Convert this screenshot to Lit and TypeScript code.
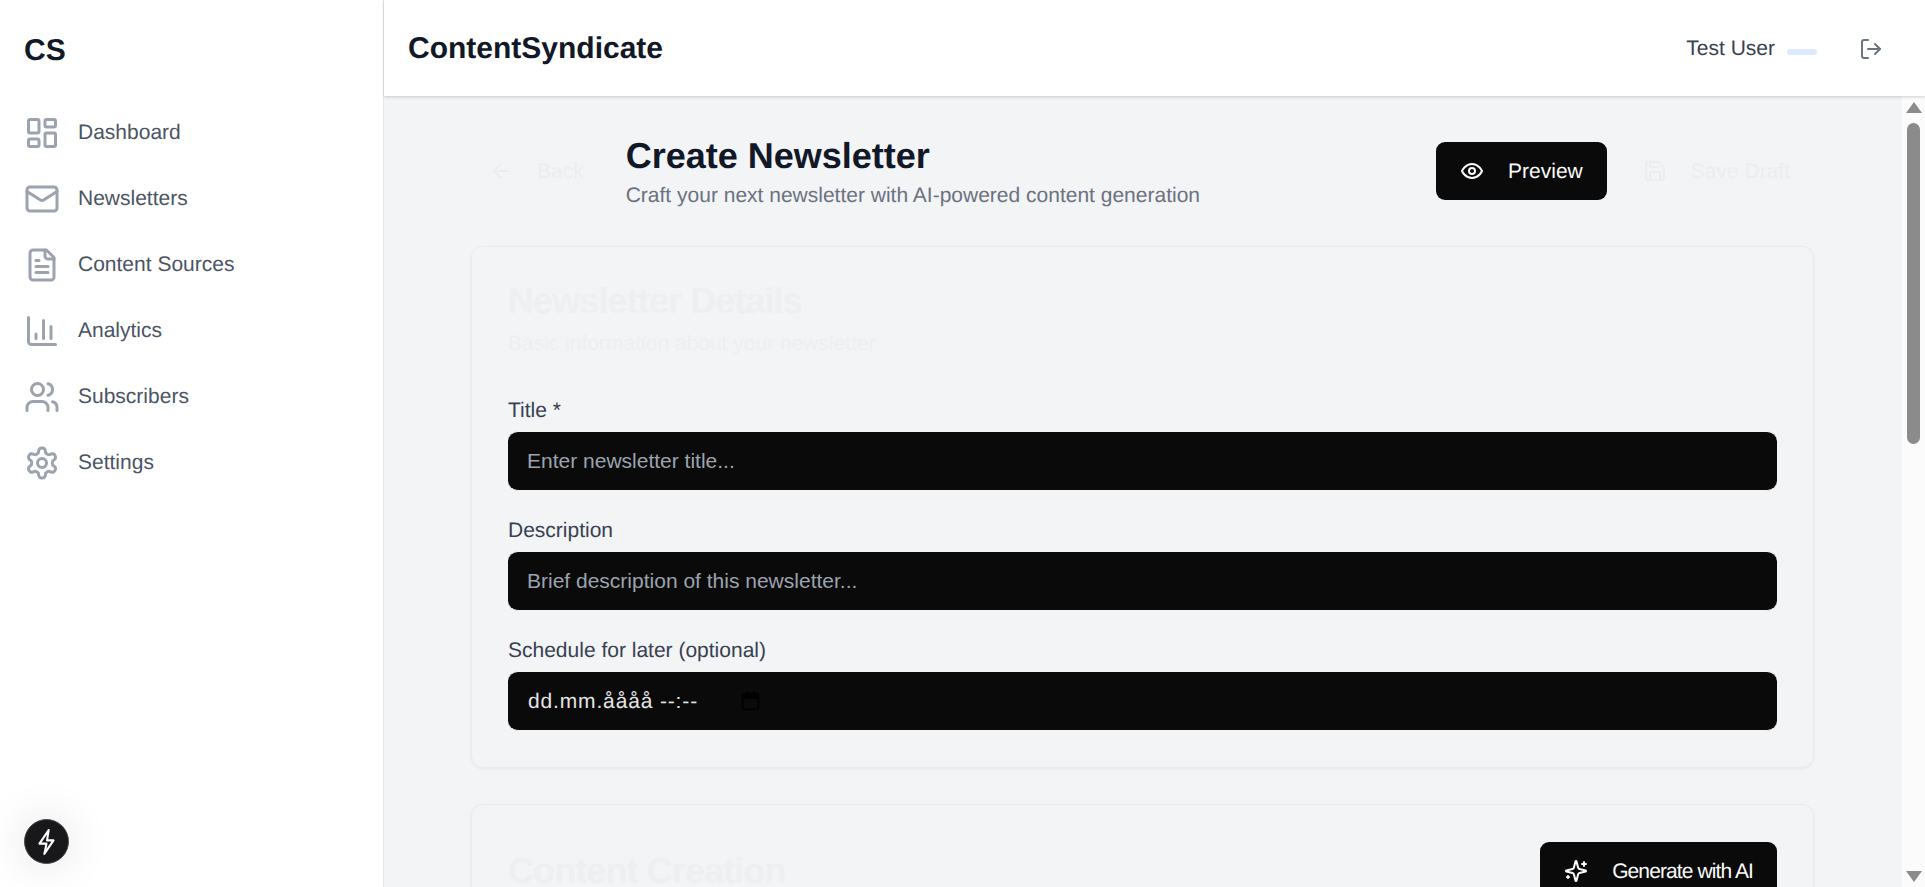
import { LitElement, html, css, svg } from 'lit';
import { customElement } from 'lit/decorators.js';

// lucide style icon paths, drawn on a 24 unit box
const ICONS = {
  dashboard: svg`<rect width="7" height="9" x="3" y="3" rx="1"/><rect width="7" height="5" x="14" y="3" rx="1"/><rect width="7" height="9" x="14" y="12" rx="1"/><rect width="7" height="5" x="3" y="16" rx="1"/>`,
  mail: svg`<rect width="20" height="16" x="2" y="4" rx="2"/><path d="m22 7-8.97 5.7a1.94 1.94 0 0 1-2.06 0L2 7"/>`,
  file: svg`<path d="M15 2H6a2 2 0 0 0-2 2v16a2 2 0 0 0 2 2h12a2 2 0 0 0 2-2V7Z"/><path d="M14 2v4a2 2 0 0 0 2 2h4"/><path d="M10 9H8"/><path d="M16 13H8"/><path d="M16 17H8"/>`,
  chart: svg`<path d="M3 3v16a2 2 0 0 0 2 2h16"/><path d="M18 17V9"/><path d="M13 17V5"/><path d="M8 17v-3"/>`,
  users: svg`<path d="M16 21v-2a4 4 0 0 0-4-4H6a4 4 0 0 0-4 4v2"/><circle cx="9" cy="7" r="4"/><path d="M22 21v-2a4 4 0 0 0-3-3.87"/><path d="M16 3.13a4 4 0 0 1 0 7.75"/>`,
  settings: svg`<path d="M12.22 2h-.44a2 2 0 0 0-2 2v.18a2 2 0 0 1-1 1.73l-.43.25a2 2 0 0 1-2 0l-.15-.08a2 2 0 0 0-2.73.73l-.22.38a2 2 0 0 0 .73 2.73l.15.1a2 2 0 0 1 1 1.72v.51a2 2 0 0 1-1 1.74l-.15.09a2 2 0 0 0-.73 2.73l.22.38a2 2 0 0 0 2.73.73l.15-.08a2 2 0 0 1 2 0l.43.25a2 2 0 0 1 1 1.73V20a2 2 0 0 0 2 2h.44a2 2 0 0 0 2-2v-.18a2 2 0 0 1 1-1.73l.43-.25a2 2 0 0 1 2 0l.15.08a2 2 0 0 0 2.73-.73l.22-.39a2 2 0 0 0-.73-2.73l-.15-.08a2 2 0 0 1-1-1.74v-.5a2 2 0 0 1 1-1.74l.15-.09a2 2 0 0 0 .73-2.73l-.22-.38a2 2 0 0 0-2.73-.73l-.15.08a2 2 0 0 1-2 0l-.43-.25a2 2 0 0 1-1-1.73V4a2 2 0 0 0-2-2z"/><circle cx="12" cy="12" r="3"/>`,
  logout: svg`<path d="M9 21H5a2 2 0 0 1-2-2V5a2 2 0 0 1 2-2h4"/><polyline points="16 17 21 12 16 7"/><line x1="21" x2="9" y1="12" y2="12"/>`,
  back: svg`<path d="m12 19-7-7 7-7"/><path d="M19 12H5"/>`,
  eye: svg`<path d="M2 12s3-7 10-7 10 7 10 7-3 7-10 7-10-7-10-7Z"/><circle cx="12" cy="12" r="3"/>`,
  save: svg`<path d="M15.2 3a2 2 0 0 1 1.4.6l3.8 3.8a2 2 0 0 1 .6 1.4V19a2 2 0 0 1-2 2H5a2 2 0 0 1-2-2V5a2 2 0 0 1 2-2z"/><path d="M17 21v-7a1 1 0 0 0-1-1H8a1 1 0 0 0-1 1v7"/><path d="M7 3v4a1 1 0 0 0 1 1h7"/>`,
  sparkles: svg`<path d="M9.937 15.5A2 2 0 0 0 8.5 14.063l-6.135-1.582a.5.5 0 0 1 0-.962L8.5 9.936A2 2 0 0 0 9.937 8.5l1.582-6.135a.5.5 0 0 1 .963 0L14.063 8.5A2 2 0 0 0 15.5 9.937l6.135 1.581a.5.5 0 0 1 0 .964L15.5 14.063a2 2 0 0 0-1.437 1.437l-1.582 6.135a.5.5 0 0 1-.963 0z"/><path d="M20 3v4"/><path d="M22 5h-4"/><path d="M4 17v2"/><path d="M5 18H3"/>`,
  calendar: svg`<path d="M8 2v4"/><path d="M16 2v4"/><rect width="18" height="18" x="3" y="4" rx="2"/><path d="M3 7.5h18" stroke-width="5" stroke-linecap="butt"/>`,
};

type IconName = keyof typeof ICONS;

const icon = (name: IconName, cls = '') => html`
  <svg class="icon ${cls}" viewBox="0 0 24 24" fill="none" stroke="currentColor" stroke-width="2" stroke-linecap="round" stroke-linejoin="round">${ICONS[name]}</svg>
`;

const NAV: { label: string; icon: IconName }[] = [
  { label: 'Dashboard', icon: 'dashboard' },
  { label: 'Newsletters', icon: 'mail' },
  { label: 'Content Sources', icon: 'file' },
  { label: 'Analytics', icon: 'chart' },
  { label: 'Subscribers', icon: 'users' },
  { label: 'Settings', icon: 'settings' },
];

@customElement('app-root')
export class AppRoot extends LitElement {
  static styles = css`
    :host {
      display: flex;
      position: relative;
      width: 100%;
      height: 887px;
      overflow: hidden;
      background: #f3f4f6;
      font-family: 'Liberation Sans', Arial, sans-serif;
      font-size: 21px;
      text-rendering: geometricPrecision;
    }

    .icon {
      display: block;
      flex: none;
      width: 24px;
      height: 24px;
    }

    /* sidebar */
    .sidebar {
      flex: none;
      box-sizing: border-box;
      width: 384px;
      background: #fff;
      border-right: 1px solid #e5e7eb;
      padding: 0 24px;
    }

    .brand {
      box-sizing: border-box;
      height: 100px;
      padding-top: 2px;
      display: flex;
      align-items: center;
      font-size: 30px;
      font-weight: 700;
      color: #111827;
    }

    .nav {
      display: flex;
      flex-direction: column;
    }

    .nav-item {
      display: flex;
      align-items: center;
      gap: 18px;
      height: 66px;
      color: #4b5563;
    }

    .nav-item .icon {
      width: 36px;
      height: 36px;
      color: #9ca3af;
    }

    .dev-badge {
      position: absolute;
      left: 24px;
      bottom: 23px;
      width: 45px;
      height: 45px;
      box-sizing: border-box;
      border-radius: 50%;
      background: #18181b;
      border: 1px solid #4b4b4f;
      color: #fff;
      display: flex;
      align-items: center;
      justify-content: center;
      box-shadow: 0 0 40px 8px rgba(0, 0, 0, 0.07);
    }

    .bolt {
      display: block;
      width: 17px;
      height: 26px;
      overflow: visible;
    }

    /* right side */
    .main {
      flex: 1;
      min-width: 0;
      display: flex;
      flex-direction: column;
    }

    .topbar {
      position: relative;
      flex: none;
      box-sizing: border-box;
      height: 96px;
      background: #fff;
      box-shadow: 0 1px 3px rgba(0, 0, 0, 0.18);
      padding: 2px 42px 0 24px;
      display: flex;
      align-items: center;
      justify-content: space-between;
    }

    .app-title {
      font-size: 30px;
      font-weight: 700;
      color: #111827;
    }

    .user {
      display: flex;
      align-items: center;
      color: #374151;
    }

    .user-pill {
      width: 30px;
      height: 6px;
      margin: 6px 0 0 12px;
      border-radius: 3px;
      background: #dbeafe;
    }

    .logout {
      margin-left: 42px;
      color: #6b7280;
    }

    .body {
      flex: 1;
      min-height: 0;
      display: flex;
    }

    .page {
      flex: 1;
      min-width: 0;
      overflow: hidden;
      padding: 36px 88px 0 87px;
    }

    .page-head {
      display: flex;
      align-items: center;
      justify-content: space-between;
      margin-bottom: 36px;
    }

    .head-left,
    .head-right {
      display: flex;
      align-items: center;
    }

    .head-left {
      gap: 24px;
    }

    .head-right {
      gap: 12px;
    }

    h1 {
      margin: 0;
      font-size: 36px;
      line-height: 48px;
      font-weight: 700;
      color: #111827;
    }

    .sub {
      line-height: 30px;
      padding-top: 1px;
      margin-bottom: -1px;
      color: #6b7280;
    }

    .btn {
      display: flex;
      align-items: center;
      gap: 24px;
      box-sizing: border-box;
      height: 58px;
      padding: 0 24px;
      border-radius: 9px;
      background: #0a0a0a;
      color: #fafafa;
      white-space: nowrap;
      flex: none;
    }

    .btn span {
      margin-top: 2px;
    }

    .btn-tight {
      letter-spacing: -0.9px;
    }

    .ghost {
      background: none;
      color: #ecedf0;
    }

    .back {
      padding: 0 18px;
    }

    .card {
      border: 1px solid #e8eaed;
      border-radius: 12px;
      padding: 35.5px 36px 36.5px;
      margin-bottom: 36px;
      box-shadow: 0 1px 3px rgba(0, 0, 0, 0.05);
    }

    .card-title {
      margin: 0;
      font-size: 36px;
      line-height: 36px;
      font-weight: 700;
      letter-spacing: -0.9px;
      color: #eeeff1;
    }

    .card-desc {
      margin-top: 10px;
      line-height: 30px;
      color: #eeeff1;
    }

    .card-head-row {
      display: flex;
      align-items: center;
      justify-content: space-between;
      height: 60px;
    }

    .fields {
      display: flex;
      flex-direction: column;
      gap: 24px;
      margin-top: 36px;
    }

    label {
      display: block;
      line-height: 31px;
      color: #374151;
    }

    .input {
      display: block;
      box-sizing: border-box;
      width: 100%;
      height: 60px;
      margin-top: 5px;
      padding: 0 19px;
      border: solid #f3f4f6;
      border-width: 1px 0;
      border-radius: 10px;
      background: #0a0a0a;
      color: #fafafa;
      font: inherit;
      outline: none;
    }

    .input::placeholder {
      color: #9ca3af;
      opacity: 1;
    }

    .date {
      display: flex;
      align-items: center;
      gap: 42px;
      color: #e5e5e5;
      letter-spacing: 0.85px;
    }

    .date span {
      margin: 2px 0 0 1px;
    }

    .date .icon {
      width: 21px;
      height: 21px;
      color: #000;
    }

    /* scrollbar of the page, drawn so the arrows match */
    .scrollbar {
      flex: none;
      box-sizing: border-box;
      width: 23px;
      background: #fbfbfb;
      display: flex;
      flex-direction: column;
      align-items: center;
      padding: 6px 0 5px;
    }

    .arrow {
      flex: none;
      width: 0;
      height: 0;
      border-left: 8px solid transparent;
      border-right: 8px solid transparent;
    }

    .arrow-up {
      border-bottom: 11px solid #8b8b8b;
    }

    .arrow-down {
      border-top: 11px solid #8b8b8b;
    }

    .track {
      flex: 1;
      align-self: stretch;
      display: flex;
      justify-content: center;
      padding-top: 10px;
    }

    .thumb {
      width: 13px;
      height: 321px;
      border-radius: 7px;
      background: #8b8b8b;
    }
  `;

  render() {
    return html`
      <aside class="sidebar">
        <div class="brand">CS</div>
        <nav class="nav">
          ${NAV.map(
            (n) => html`<div class="nav-item">${icon(n.icon)}<span>${n.label}</span></div>`,
          )}
        </nav>
      </aside>
      <div class="dev-badge">
        <svg class="bolt" viewBox="0 0 15 24" fill="none" stroke="currentColor" stroke-width="1.900" stroke-linejoin="round">
          <path d="M9.500 1 1 13.500h6.500l-2 9.500L14 10.500H8z" />
        </svg>
      </div>

      <div class="main">
        <header class="topbar">
          <div class="app-title">ContentSyndicate</div>
          <div class="user">
            <span>Test User</span>
            <span class="user-pill"></span>
            <span class="logout">${icon('logout')}</span>
          </div>
        </header>

        <div class="body">
          <main class="page">
            <div class="page-head">
              <div class="head-left">
                <div class="btn ghost back">${icon('back')}<span>Back</span></div>
                <div>
                  <h1>Create Newsletter</h1>
                  <div class="sub">Craft your next newsletter with AI-powered content generation</div>
                </div>
              </div>
              <div class="head-right">
                <div class="btn">${icon('eye')}<span>Preview</span></div>
                <div class="btn ghost">${icon('save')}<span>Save Draft</span></div>
              </div>
            </div>

            <section class="card">
              <h3 class="card-title">Newsletter Details</h3>
              <div class="card-desc">Basic information about your newsletter</div>
              <div class="fields">
                <div>
                  <label>Title *</label>
                  <input class="input" placeholder="Enter newsletter title..." />
                </div>
                <div>
                  <label>Description</label>
                  <input class="input" placeholder="Brief description of this newsletter..." />
                </div>
                <div>
                  <label>Schedule for later (optional)</label>
                  <div class="input date"><span>dd.mm.åååå --:--</span>${icon('calendar')}</div>
                </div>
              </div>
            </section>

            <section class="card">
              <div class="card-head-row">
                <h3 class="card-title">Content Creation</h3>
                <div class="btn btn-tight">${icon('sparkles')}<span>Generate with AI</span></div>
              </div>
            </section>
          </main>

          <div class="scrollbar">
            <div class="arrow arrow-up"></div>
            <div class="track"><div class="thumb"></div></div>
            <div class="arrow arrow-down"></div>
          </div>
        </div>
      </div>
    `;
  }
}
